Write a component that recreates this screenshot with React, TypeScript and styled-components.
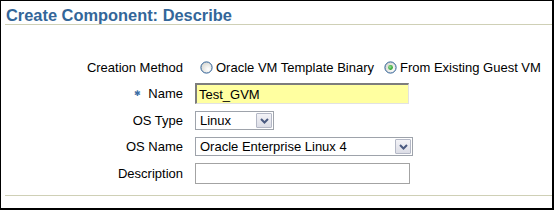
import React from 'react';
import styled, { createGlobalStyle } from 'styled-components';

const GlobalStyle = createGlobalStyle`
  html, body {
    margin: 0;
    padding: 0;
    background: #fff;
  }
  body {
    font-family: "Liberation Sans", Arial, sans-serif;
    font-size: 13px;
    color: #000;
  }
`;

const Frame = styled.div`
  box-sizing: border-box;
  width: 554px;
  height: 210px;
  border-style: solid;
  border-color: #000;
  border-width: 1px 2px 2px 1px;
  padding-left: 4px;
  display: flex;
  flex-direction: column;
`;

const Header = styled.h1`
  margin: 0;
  padding: 5px 0 0 1px;
  font-size: 16.4px;
  line-height: 18px;
  font-weight: bold;
  color: #336699;
  border-bottom: 1px solid #cfd0b6;
`;

const Form = styled.div`
  margin-top: 33px;
  display: grid;
  grid-template-columns: 178px auto;
  column-gap: 12px;
  row-gap: 7px;
  align-items: center;
`;

const Label = styled.div`
  text-align: right;
  white-space: nowrap;
`;

const Required = styled.span`
  color: #3d6fa5;
  font-size: 8px;
  margin-right: 7px;
  position: relative;
  top: -2px;
`;

const RadioGroup = styled.div`
  height: 18px;
  display: flex;
  align-items: center;
  white-space: nowrap;
`;

const RadioOption = styled.label`
  display: flex;
  align-items: center;
  margin-right: 5px;
`;

const RadioMark = styled.span`
  display: inline-flex;
  margin: 1px 3px 0 5px;
`;

const TextBox = styled.div<{ $w: number; $required?: boolean }>`
  box-sizing: border-box;
  width: ${(p) => p.$w}px;
  height: 21px;
  padding-left: 2px;
  display: flex;
  align-items: center;
  background: ${(p) => (p.$required ? '#ffffa0' : '#fff')};
  border-style: solid;
  border-color: ${(p) =>
    p.$required ? '#7d7d7d #e2e2e2 #e2e2e2 #7d7d7d' : '#a3a3a3'};
  border-width: ${(p) => (p.$required ? '2px 1px 1px 2px' : '1px')};
`;

const SelectBox = styled.div<{ $w: number }>`
  box-sizing: border-box;
  width: ${(p) => p.$w}px;
  height: 19px;
  border: 1px solid #9ea3ab;
  background: #fff;
  display: flex;
  align-items: center;
  padding: 0 1px 0 4px;
`;

const SelectText = styled.span`
  flex: 1;
  white-space: nowrap;
`;

const DropButton = styled.span`
  box-sizing: border-box;
  width: 16px;
  height: 15px;
  border: 1px solid #b4b8c6;
  border-radius: 1px;
  background: linear-gradient(#f3f3f7, #dcdde6);
  display: flex;
  align-items: center;
  justify-content: center;
`;

const Divider = styled.div`
  margin-top: 11px;
  border-top: 1px solid #cfd0b6;
`;

const Radio = ({ checked }: { checked?: boolean }) => (
  <RadioMark>
    <svg width="13" height="13" viewBox="0 0 13 13">
      <defs>
        <radialGradient id="rg" cx="0.65" cy="0.65" r="0.7">
          <stop offset="0" stopColor="#ffffff" />
          <stop offset="1" stopColor="#d6d6d0" />
        </radialGradient>
        <radialGradient id="dot" cx="0.4" cy="0.4" r="0.6">
          <stop offset="0" stopColor="#9be39b" />
          <stop offset="1" stopColor="#1f9a1f" />
        </radialGradient>
      </defs>
      <circle cx="6.5" cy="6.5" r="5.6" fill="url(#rg)" stroke="#2a5d94" strokeWidth="1" />
      {checked && <circle cx="6.5" cy="6.5" r="2.4" fill="url(#dot)" />}
    </svg>
  </RadioMark>
);

const Chevron = () => (
  <svg width="9" height="6" viewBox="0 0 9 6">
    <path d="M1 1 L4.5 4.5 L8 1" fill="none" stroke="#4a5a80" strokeWidth="2" />
  </svg>
);

const Select = ({ value, width }: { value: string; width: number }) => (
  <SelectBox $w={width}>
    <SelectText>{value}</SelectText>
    <DropButton>
      <Chevron />
    </DropButton>
  </SelectBox>
);

export default function App() {
  return (
    <>
      <GlobalStyle />
      <Frame>
        <Header>Create Component: Describe</Header>
        <Form>
          <Label>Creation Method</Label>
          <RadioGroup>
            <RadioOption>
              <Radio />
              Oracle VM Template Binary
            </RadioOption>
            <RadioOption>
              <Radio checked />
              From Existing Guest VM
            </RadioOption>
          </RadioGroup>

          <Label>
            <Required>✱</Required>Name
          </Label>
          <TextBox $w={214} $required>
            Test_GVM
          </TextBox>

          <Label>OS Type</Label>
          <Select value="Linux" width={79} />

          <Label>OS Name</Label>
          <Select value="Oracle Enterprise Linux 4" width={218} />

          <Label>Description</Label>
          <TextBox $w={215} />
        </Form>
        <Divider />
      </Frame>
    </>
  );
}
